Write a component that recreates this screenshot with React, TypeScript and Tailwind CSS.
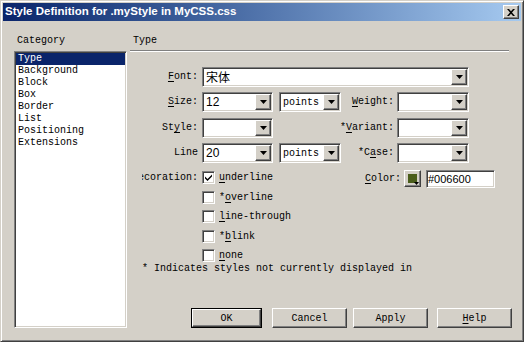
const raised =
  "border border-t-white border-l-white border-r-[#404040] border-b-[#404040] shadow-[inset_-1px_-1px_0_#808080] bg-[#d4d0c8]";
const sunken =
  "border border-t-[#808080] border-l-[#808080] border-r-white border-b-white shadow-[inset_1px_1px_0_#404040,inset_-1px_-1px_0_#d4d0c8] p-[1px]";

function Arrow() {
  return (
    <div className={`flex h-full w-[16px] shrink-0 items-center justify-center ${raised}`}>
      <svg width="7" height="4" viewBox="0 0 7 4">
        <path d="M0 0h7L3.5 4z" fill="#000" />
      </svg>
    </div>
  );
}

function Select({ className, children }: { className: string; children?: React.ReactNode }) {
  return (
    <div className={`flex h-[20px] shrink-0 bg-white ${sunken} ${className}`}>
      <div className="flex min-w-0 flex-1 items-center overflow-hidden pl-[2px] whitespace-nowrap">{children}</div>
      <Arrow />
    </div>
  );
}

function Check({ checked }: { checked?: boolean }) {
  return (
    <div className={`flex h-[13px] w-[13px] shrink-0 items-center justify-center bg-white ${sunken} p-0`}>
      {checked && (
        <svg width="7" height="7" viewBox="0 0 7 7">
          <path d="M0 2.5l2.5 2.5L7 0.5v2L2.5 7 0 4.5z" fill="#000" />
        </svg>
      )}
    </div>
  );
}

function Label({ className, children }: { className: string; children: React.ReactNode }) {
  return (
    <div className={`shrink-0 overflow-hidden whitespace-nowrap text-right leading-[20px] ${className}`}>{children}</div>
  );
}

const u = "underline underline-offset-2";

function DecoRow({ label, children, first }: { label: React.ReactNode; children?: React.ReactNode; first?: boolean }) {
  return (
    <div className="flex h-[19.5px] shrink-0 items-start">
      <div className="ml-[12px] flex w-[60px] justify-end overflow-hidden whitespace-nowrap pr-[4px] leading-[15px]">
        {first ? <span className="shrink-0">Decoration:</span> : null}
      </div>
      <div className="mt-[1px]">
        <Check checked={first} />
      </div>
      <div className="ml-[4px] w-[136px] leading-[15px]">{label}</div>
      {children}
    </div>
  );
}

function Btn({ className, children, def }: { className: string; children: React.ReactNode; def?: boolean }) {
  return (
    <div className={`${def ? "border border-black" : ""} h-[20px] shrink-0 ${className}`}>
      <div className={`flex h-full w-full items-center justify-center ${raised}`}>{children}</div>
    </div>
  );
}

export default function App() {
  const cats = ["Background", "Block", "Box", "Border", "List", "Positioning", "Extensions"];
  return (
    <div className="flex h-[342px] w-[524px] flex-col overflow-hidden border border-t-[#d4d0c8] border-l-[#d4d0c8] border-r-[#404040] border-b-[#404040] bg-[#d4d0c8] p-[2px] font-['Liberation_Mono',monospace] text-[10px] text-black shadow-[inset_1px_1px_0_#fff,inset_-1px_-1px_0_#808080]">
      <div className="flex h-[18px] shrink-0 items-center bg-gradient-to-r from-[#0a246a] to-[#a6caf0] pl-[2px]">
        <span className="flex-1 font-['Liberation_Sans',Arial,sans-serif] text-[11.5px] font-bold text-white">
          Style Definition for .myStyle in MyCSS.css
        </span>
        <div className={`mr-[2px] flex h-[14px] w-[16px] items-center justify-center ${raised}`}>
          <svg width="8" height="7" viewBox="0 0 8 7">
            <path d="M0 0h2l2 2.3L6 0h2L5 3.5 8 7H6L4 4.7 2 7H0l3-3.5z" fill="#000" />
          </svg>
        </div>
      </div>

      <div className="flex flex-1">
        <div className="ml-[11px] flex w-[113px] shrink-0 flex-col">
          <div className="mt-[14px] pl-[3px] leading-[12px]">Category</div>
          <div className={`mt-[4px] h-[277px] bg-white ${sunken}`}>
            <div className="bg-[#0a246a] pl-[2px] leading-[12px] text-white">Type</div>
            {cats.map((c) => (
              <div key={c} className="pl-[2px] leading-[12px]">
                {c}
              </div>
            ))}
          </div>
        </div>

        <div className="ml-[3px] flex w-[382px] shrink-0 flex-col">
          <div className="mt-[14px] pl-[3px] leading-[12px]">Type</div>
          <div className="mt-[3px] h-[2px] w-[379px] border-t border-b border-t-[#808080] border-b-white" />

          <div className="mt-[15px] flex">
            <Label className="w-[72px] pr-[4px]">
              <span className={u}>F</span>ont:
            </Label>
            <Select className="w-[267px]">
              <span className="font-['Noto_Sans_CJK_SC',sans-serif] text-[12px] leading-none">宋体</span>
            </Select>
          </div>

          <div className="mt-[5px] flex">
            <Label className="w-[72px] pr-[4px]">
              <span className={u}>S</span>ize:
            </Label>
            <Select className="w-[71px]">
              <span className="font-['Liberation_Sans',Arial,sans-serif] text-[12px]">12</span>
            </Select>
            <Select className="ml-[6px] w-[62px]">points</Select>
            <Label className="w-[56px] pr-[3px]">
              <span className={u}>W</span>eight:
            </Label>
            <Select className="w-[72px]" />
          </div>

          <div className="mt-[6px] flex">
            <Label className="w-[72px] pr-[4px]">
              St<span className={u}>y</span>le:
            </Label>
            <Select className="w-[71px]" />
            <Label className="w-[124px] pr-[3px]">
              *<span className={u}>V</span>ariant:
            </Label>
            <Select className="w-[72px]" />
          </div>

          <div className="mt-[5px] flex">
            <Label className="w-[72px] pr-[4px]">Line</Label>
            <Select className="w-[71px]">
              <span className="font-['Liberation_Sans',Arial,sans-serif] text-[12px]">20</span>
            </Select>
            <Select className="ml-[6px] w-[62px]">points</Select>
            <Label className="w-[56px] pr-[3px]">
              *C<span className={u}>a</span>se:
            </Label>
            <Select className="w-[72px]" />
          </div>

          <div className="mt-[7px] flex flex-col">
            <DecoRow
              first
              label={
                <>
                  <span className={u}>u</span>nderline
                </>
              }
            >
              <div className="w-[49px] pr-[3px] text-right leading-[17px]">
                <span className={u}>C</span>olor:
              </div>
              <div className={`relative h-[17px] w-[17px] p-[3px] ${raised}`}>
                <div className="h-full w-full bg-[#4a5d1b]" />
                <svg className="absolute right-[1px] bottom-[1px]" width="5" height="3" viewBox="0 0 5 3">
                  <path d="M0 0h5L2.5 3z" fill="#000" />
                </svg>
              </div>
              <div
                className={`ml-[5px] flex h-[18px] w-[69px] items-center bg-white pl-[1px] font-['Liberation_Sans',Arial,sans-serif] text-[11px] ${sunken}`}
              >
                #006600
              </div>
            </DecoRow>
            <DecoRow
              label={
                <>
                  *<span className={u}>o</span>verline
                </>
              }
            />
            <DecoRow
              label={
                <>
                  <span className={u}>l</span>ine-through
                </>
              }
            />
            <DecoRow
              label={
                <>
                  *<span className={u}>b</span>link
                </>
              }
            />
            <div className="h-[15px] overflow-hidden">
              <DecoRow
                label={
                  <>
                    <span className={u}>n</span>one
                  </>
                }
              />
            </div>
          </div>

          <div className="pl-[12px] leading-[12px] whitespace-nowrap">* Indicates styles not currently displayed in</div>

          <div className="mt-[33px] flex">
            <Btn def className="ml-[61px] w-[71px]">
              OK
            </Btn>
            <Btn className="ml-[10px] w-[75px]">Cancel</Btn>
            <Btn className="ml-[6px] w-[75px]">Apply</Btn>
            <Btn className="ml-[9px] w-[75px]">
              <span className={u}>H</span>elp
            </Btn>
          </div>
        </div>
      </div>
    </div>
  );
}
